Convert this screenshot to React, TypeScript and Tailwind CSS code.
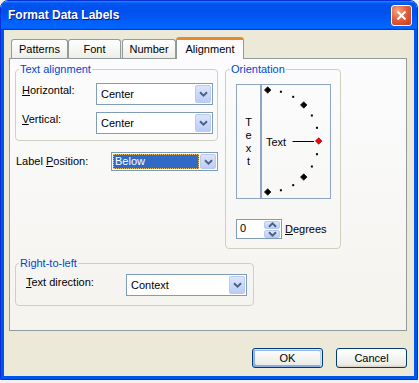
import type { ReactNode } from 'react'

function Chevron({ up = false }: { up?: boolean }) {
  return (
    <svg width="9" height="6" viewBox="0 0 9 6" className={up ? 'rotate-180' : ''}>
      <path d="M1 1.2 L4.5 4.6 L8 1.2" fill="none" stroke="#4d6185" strokeWidth="2" />
    </svg>
  )
}

function ArrowButton() {
  return (
    <div className="flex w-[16px] shrink-0 items-center justify-center rounded-[2px] border border-[#b9cbf3] bg-[linear-gradient(#dbe5fc,#bacdf7)]">
      <Chevron />
    </div>
  )
}

function Combo({ value, className, selected = false }: { value: string; className: string; selected?: boolean }) {
  return (
    <div className={`flex border border-[#7f9db9] bg-white p-px ${className}`}>
      {selected ? (
        <div className="mr-px flex min-w-0 flex-1 items-center border border-dotted border-[#e8c36a] bg-[#316ac5] pl-[1px] text-white">
          {value}
        </div>
      ) : (
        <div className="flex min-w-0 flex-1 items-center pl-[3px]">{value}</div>
      )}
      <ArrowButton />
    </div>
  )
}

function Group({
  title,
  className,
  legendClass,
  children,
}: {
  title: string
  className: string
  legendClass: string
  children: ReactNode
}) {
  return (
    <fieldset className={`rounded-[4px] border border-[#d0d0bf] ${className}`}>
      <legend className={`px-[1px] leading-[13px] text-[#0046d5] ${legendClass}`}>{title}</legend>
      {children}
    </fieldset>
  )
}

function Tab({ label, className, active = false }: { label: string; className: string; active?: boolean }) {
  if (active) {
    return (
      <div
        className={`relative z-10 -mb-px flex h-[22px] items-center justify-center rounded-t-[3px] border-x border-t-[3px] border-x-[#919b9c] border-t-[#e68b2c] bg-[#fcfcfe] pb-[1px] ${className}`}
      >
        {label}
      </div>
    )
  }
  return (
    <div
      className={`flex h-[19px] items-center justify-center rounded-t-[3px] border-x border-t border-[#919b9c] bg-[linear-gradient(180deg,#fff,#fafaf9_26%,#f0f0ea_95%,#ecebe6)] ${className}`}
    >
      {label}
    </div>
  )
}

// semicircle of tick marks on the orientation dial
const R = 51
const CX = 5.7
const CY = 56
const ticks = Array.from({ length: 13 }).map((_, i) => {
  const a = ((i * 15) * Math.PI) / 180
  return { x: CX + R * Math.sin(a), y: CY - R * Math.cos(a), big: i % 3 === 0, red: i === 6 }
})

function Dial() {
  return (
    <svg width="68" height="113" viewBox="0 0 68 113">
      {ticks.map((t, i) =>
        t.big ? (
          <polygon
            key={i}
            points={`${t.x},${t.y - 3.3} ${t.x + 3.3},${t.y} ${t.x},${t.y + 3.3} ${t.x - 3.3},${t.y}`}
            fill={t.red ? '#ff0000' : '#000'}
            stroke={t.red ? '#600' : '#000'}
            strokeWidth="0.6"
          />
        ) : (
          <rect key={i} x={t.x - 1} y={t.y - 1} width="2" height="2" fill="#000" />
        ),
      )}
      <line x1="30.5" y1="56.5" x2="52" y2="56.5" stroke="#000" strokeWidth="1" />
      <text x="4" y="61" fontSize="11" fontFamily="Liberation Sans, Arial, sans-serif" fill="#000">
        Text
      </text>
    </svg>
  )
}

export default function App() {
  return (
    <div className="min-h-screen bg-[#f1f1f1] font-['Liberation_Sans',Arial,sans-serif] text-[11px] leading-[13px] text-black">
      <div className="flex h-[380px] w-[418px] flex-col overflow-hidden rounded-t-[8px] border border-[#0831d9]">
        {/* title bar */}
        <div className="flex h-[29px] shrink-0 items-center justify-between bg-[linear-gradient(180deg,#0997ff,#0053ee_8%,#0050ee_40%,#0066ff_88%,#0066ff_93%,#005bff_95%,#003dd7_96%,#003dd7)] pl-[7px] pr-[5px]">
          <span className="text-[12px] font-bold text-white [text-shadow:1px_1px_#0a1883]">Format Data Labels</span>
          <div className="flex h-[21px] w-[21px] items-center justify-center rounded-[3px] border border-white bg-[radial-gradient(circle_at_30%_25%,#f3a585,#e2603c_45%,#c9391a)]">
            <svg width="11" height="11" viewBox="0 0 11 11">
              <path d="M1.5 1.5 L9.5 9.5 M9.5 1.5 L1.5 9.5" stroke="#fff" strokeWidth="2.2" />
            </svg>
          </div>
        </div>

        {/* frame */}
        <div className="flex flex-1 flex-col bg-[#0055ea] px-[3px] pb-[3px]">
          <div className="flex flex-1 flex-col bg-[#ece9d8] pt-[7px]">
            {/* tabs */}
            <div className="ml-[7px] flex h-[21px] items-end">
              <Tab label="Patterns" className="w-[57px]" />
              <Tab label="Font" className="w-[53px]" />
              <Tab label="Number" className="ml-px w-[54px]" />
              <Tab label="Alignment" active className="w-[68px]" />
            </div>

            {/* panel */}
            <div className="ml-[5px] h-[273px] w-[398px] border border-[#919b9c] bg-[linear-gradient(#fcfcfe,#f4f3ee)] pl-[5px] pt-[4px]">
              <div className="flex items-start">
                <div className="flex w-[203px] flex-col">
                  <Group title="Text alignment" className="w-[203px]" legendClass="ml-[3px]">
                    <div className="flex flex-col gap-[7px] pb-[6px] pl-[6px] pt-[7px]">
                      <div className="flex items-start">
                        <span className="w-[74px] pt-[1px]">
                          <u>H</u>orizontal:
                        </span>
                        <Combo value="Center" className="h-[22px] w-[117px]" />
                      </div>
                      <div className="flex items-start">
                        <span className="w-[74px] pt-[1px]">
                          <u>V</u>ertical:
                        </span>
                        <Combo value="Center" className="h-[22px] w-[117px]" />
                      </div>
                    </div>
                  </Group>
                  <div className="ml-px mt-[11px] flex items-center justify-between">
                    <span>
                      Label <u>P</u>osition:
                    </span>
                    <Combo value="Below" selected className="h-[19px] w-[107px]" />
                  </div>
                </div>

                <Group title="Orientation" className="ml-[7px] w-[116px]" legendClass="ml-[4px]">
                  <div className="pb-[9px] pl-[10px] pt-[8px]">
                    <div className="flex">
                      <div className="flex h-[115px] w-[25px] flex-col items-center justify-center border border-[#8ea6c4]">
                        <span>T</span>
                        <span>e</span>
                        <span>x</span>
                        <span>t</span>
                      </div>
                      <div className="h-[115px] w-[70px] border border-[#8ea6c4]">
                        <Dial />
                      </div>
                    </div>
                    <div className="mt-[20px] flex items-center">
                      <div className="flex h-[20px] w-[46px] border border-[#7f9db9] bg-white p-px">
                        <span className="flex-1 pl-[2px] pt-[1px]">0</span>
                        <div className="flex w-[16px] flex-col gap-px">
                          <div className="flex flex-1 items-center justify-center rounded-[2px] border border-[#b9cbf3] bg-[linear-gradient(#dbe5fc,#bacdf7)]">
                            <Chevron up />
                          </div>
                          <div className="flex flex-1 items-center justify-center rounded-[2px] border border-[#b9cbf3] bg-[linear-gradient(#dbe5fc,#bacdf7)]">
                            <Chevron />
                          </div>
                        </div>
                      </div>
                      <span className="ml-[3px]">
                        <u>D</u>egrees
                      </span>
                    </div>
                  </div>
                </Group>
              </div>

              <Group title="Right-to-left" className="mt-[8px] w-[239px]" legendClass="ml-[3px]">
                <div className="flex items-start pb-[9px] pl-[10px] pt-[4px]">
                  <span className="w-[100px] pt-[2px]">
                    <u>T</u>ext direction:
                  </span>
                  <Combo value="Context" className="h-[22px] w-[121px]" />
                </div>
              </Group>
            </div>

            {/* buttons */}
            <div className="mt-[17px] flex justify-end gap-[13px] pr-[7px]">
              <button className="h-[20px] w-[71px] rounded-[3px] border border-[#003c74] bg-[linear-gradient(180deg,#fff,#ecebe6_86%,#d6d0c5)] shadow-[inset_-1px_1px_#cee7ff,inset_1px_2px_#98b8ea,inset_-2px_2px_#bcd4f6,inset_1px_-1px_#89ade4,inset_2px_-2px_#89ade4]">
                OK
              </button>
              <button className="h-[20px] w-[71px] rounded-[3px] border border-[#003c74] bg-[linear-gradient(180deg,#fff,#ecebe6_86%,#d6d0c5)]">
                Cancel
              </button>
            </div>
          </div>
        </div>
      </div>
    </div>
  )
}
